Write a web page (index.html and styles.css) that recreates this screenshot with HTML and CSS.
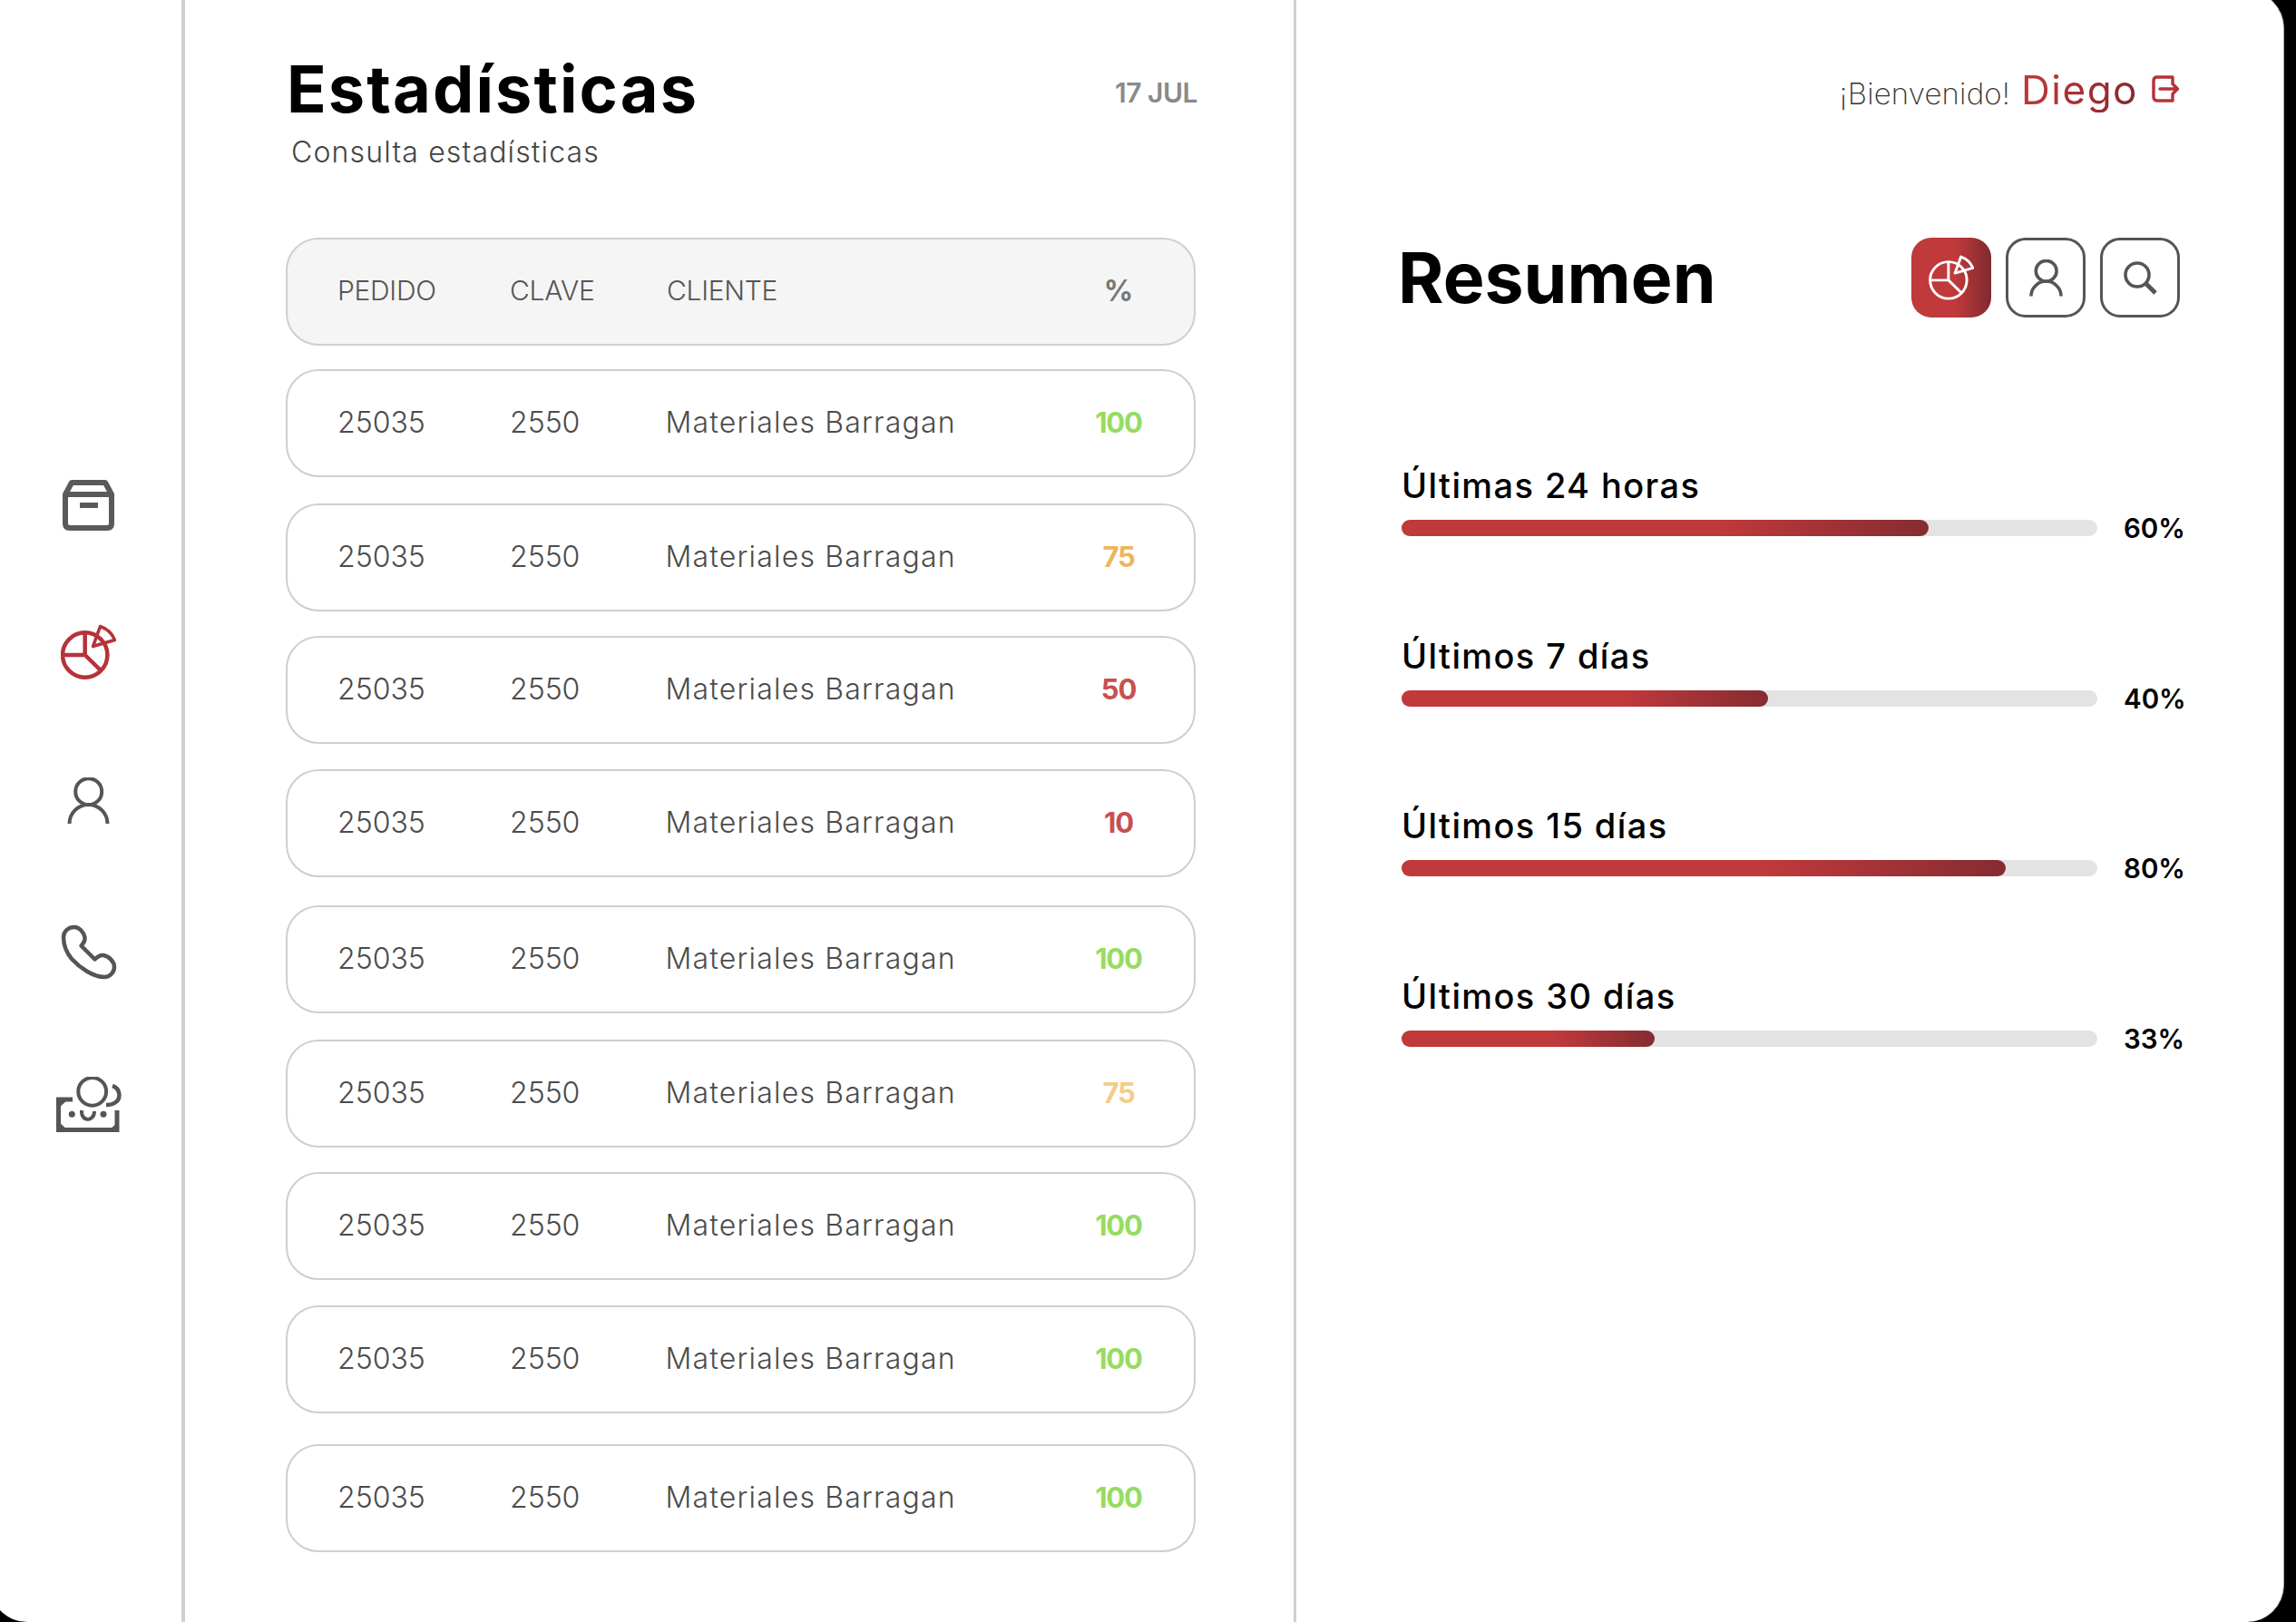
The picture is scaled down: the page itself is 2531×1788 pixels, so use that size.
FILE: index.html
```html
<!DOCTYPE html>
<html lang="es">
<head>
<meta charset="utf-8">
<title>Estadísticas</title>
<link rel="stylesheet" href="styles.css">
</head>
<body>
<div class="panel">
  <nav class="sidebar">
    <svg class="nav-icon nav-archive" width="57" height="56" viewBox="0 0 57 56" fill="none" stroke="#5a5a5a" stroke-width="6" stroke-linejoin="round"><path d="M3 16 10 3H47L54 16V48Q54 53 49 53H8Q3 53 3 48Z"/><path d="M3 16H54"/><path d="M19 28H39" stroke-linecap="butt"/></svg>
    <svg class="nav-icon nav-pie" width="61" height="61" viewBox="0 0 61 61" fill="none" stroke="#b5333a" stroke-width="4.5"><circle cx="26.7" cy="34" r="24.7"/><path d="M26.7 9V34H2M26.7 34 44 51"/><path d="M35.5 24.5 43.5 2.5Q55 6.5 59.5 17.5Z" stroke-linejoin="round" stroke-width="3.6"/></svg>
    <svg class="nav-icon nav-user" width="47" height="51" viewBox="0 0 47 51" fill="none" stroke="#555" stroke-width="4"><circle cx="23.7" cy="15.7" r="14.5"/><path d="M2.5 51A21 21 0 0 1 44.5 51"/></svg>
    <svg class="nav-icon nav-phone" width="62" height="61" viewBox="0 0 62 61" fill="none" stroke="#555" stroke-width="4.5" stroke-linejoin="round"><path d="M3 14C3 7 9 3 15 3 20 3 25 8 26.5 14 27 18 25 21 22.5 23.5L37.5 38.5C40 36 43 33.5 47 34 53 35 59 41 59 47 59 53 54 58 48 58 36 58 21 48 12 38 7 32 3 23 3 14Z"/></svg>
    <svg class="nav-icon nav-money" width="72" height="61" viewBox="0 0 72 61" fill="none" stroke="#555"><circle cx="39.7" cy="16.3" r="15.4" stroke-width="4"/><path d="M62 10C71 13 72 25 64 29 61 31 58 31 55 31" stroke-width="4.5"/><path d="M18 25H2.5V58.5H67V37" stroke-width="5"/><path d="M2 25H13L2 35ZM2 59V49L13 59ZM68 59H58L68 50Z" fill="#555" stroke="none"/><circle cx="17.3" cy="41.3" r="3.5" fill="#555" stroke="none"/><circle cx="52" cy="41.3" r="3.5" fill="#555" stroke="none"/><path d="M28 37C27 50 42 50 42 38" stroke-width="4"/></svg>
  </nav>

  <main class="orders">
    <header class="orders-head">
      <div>
        <h1 class="title">Estadísticas</h1>
        <p class="subtitle">Consulta estadísticas</p>
      </div>
      <span class="date">17 JUL</span>
    </header>
    <div class="table">
      <div class="row row-head"><span>PEDIDO</span><span>CLAVE</span><span>CLIENTE</span><span class="pct pct-head">%</span></div>
      <div class="row"><span>25035</span><span>2550</span><span class="client">Materiales Barragan</span><span class="pct green">100</span></div>
      <div class="row"><span>25035</span><span>2550</span><span class="client">Materiales Barragan</span><span class="pct orange">75</span></div>
      <div class="row"><span>25035</span><span>2550</span><span class="client">Materiales Barragan</span><span class="pct red">50</span></div>
      <div class="row"><span>25035</span><span>2550</span><span class="client">Materiales Barragan</span><span class="pct red">10</span></div>
      <div class="row"><span>25035</span><span>2550</span><span class="client">Materiales Barragan</span><span class="pct green">100</span></div>
      <div class="row"><span>25035</span><span>2550</span><span class="client">Materiales Barragan</span><span class="pct pale">75</span></div>
      <div class="row"><span>25035</span><span>2550</span><span class="client">Materiales Barragan</span><span class="pct green">100</span></div>
      <div class="row"><span>25035</span><span>2550</span><span class="client">Materiales Barragan</span><span class="pct green">100</span></div>
      <div class="row"><span>25035</span><span>2550</span><span class="client">Materiales Barragan</span><span class="pct green">100</span></div>
    </div>
  </main>

  <aside class="summary">
    <div class="welcome">
      <span class="hello">¡Bienvenido!</span>
      <span class="name">Diego</span>
      <svg class="logout" width="31" height="30" viewBox="0 0 31 30" fill="none" stroke="#b5333a" stroke-width="3.4" stroke-linejoin="round" stroke-linecap="round"><path d="M23 8V2H6Q2 2 2 6V24Q2 28 6 28H23V22"/><path d="M9 15H28.5M23 9.5 28.5 15 23 20.5"/></svg>
    </div>
    <div class="summary-head">
      <h2 class="resumen">Resumen</h2>
      <div class="actions">
        <button class="action action-on"><svg width="50" height="50" viewBox="0 0 61 61" fill="none" stroke="#fff" stroke-width="3.6"><circle cx="26.7" cy="34" r="24.7"/><path d="M26.7 9V34H2M26.7 34 44 51"/><path d="M35.5 24.5 43.5 2.5Q55 6.5 59.5 17.5Z" stroke-linejoin="round"/></svg></button>
        <button class="action"><svg width="37" height="41" viewBox="0 0 47 51" fill="none" stroke="#555" stroke-width="4.5"><circle cx="23.7" cy="15.7" r="14.5"/><path d="M2.5 51A21 21 0 0 1 44.5 51"/></svg></button>
        <button class="action"><svg width="37" height="37" viewBox="0 0 37 37" fill="none" stroke="#555"><circle cx="15" cy="15" r="13" stroke-width="3.6"/><path d="M24.5 24.5 35 35" stroke-width="5"/></svg></button>
      </div>
    </div>
    <div class="stats">
      <div class="stat"><div class="stat-label">Últimas 24 horas</div><div class="track"><div class="fill" style="width:581px"></div></div><span class="stat-pct">60%</span></div>
      <div class="stat"><div class="stat-label">Últimos 7 días</div><div class="track"><div class="fill" style="width:404px"></div></div><span class="stat-pct">40%</span></div>
      <div class="stat"><div class="stat-label">Últimos 15 días</div><div class="track"><div class="fill" style="width:666px"></div></div><span class="stat-pct">80%</span></div>
      <div class="stat"><div class="stat-label">Últimos 30 días</div><div class="track"><div class="fill" style="width:279px"></div></div><span class="stat-pct">33%</span></div>
    </div>
  </aside>
</div>
</body>
</html>
```
FILE: styles.css
```css
* { box-sizing: border-box; margin: 0; padding: 0; }
html, body { height: 100%; }
body {
  background: #000;
  overflow: hidden;
  font-family: Inter, "Noto Sans", sans-serif;
  color: #555;
}
.panel {
  display: flex;
  width: 2529px;
  height: 1798px;
  margin: -10px 0 0 -11px;
  background: #fff;
  border-radius: 0 41px 41px 41px;
  border-right: 1px solid #aaa;
  overflow: hidden;
}
.sidebar {
  flex: 0 0 215px;
  border-right: 4px solid #cfcfcf;
  display: flex;
  flex-direction: column;
  align-items: center;
  padding: 539px 0 0 6px;
}
.nav-pie { margin-top: 103px; }
.nav-user { margin-top: 108px; }
.nav-phone { margin-top: 111px; }
.nav-money { margin-top: 107px; }
.nav-icon { display: block; flex: none; }

.orders {
  flex: 0 0 1225px;
  border-right: 3px solid #cfcfcf;
  padding: 10px 108px 0 111px;
}
.orders-head {
  display: flex;
  justify-content: space-between;
  align-items: flex-start;
  height: 262px;
  margin-right: -2px;
}
.title {
  font-size: 72px;
  font-weight: 700;
  line-height: 80px;
  letter-spacing: 2.1px;
  color: #000;
  margin: 58px 0 0 1px;
}
.subtitle {
  font-size: 32px;
  font-weight: 300;
  line-height: 40px;
  letter-spacing: 1.15px;
  color: #444;
  margin: 10px 0 0 6px;
}
.date {
  font-size: 30px;
  font-weight: 600;
  line-height: 40px;
  letter-spacing: -0.5px;
  color: #8a8a8a;
  margin-top: 82px;
}
.row {
  display: grid;
  grid-template-columns: 190px 173px 1fr 100px;
  align-items: center;
  height: 119px;
  padding: 0 33px 3px 55px;
  margin-top: 28px;
  border: 2px solid #cfcfcf;
  border-radius: 36px;
  font-size: 32px;
  font-weight: 350;
  color: #4c4c4c;
}
.client { letter-spacing: 1.2px; margin-left: -1.5px; }
.row-head {
  margin-top: 0;
  background: #f5f5f5;
  font-size: 30px;
  font-weight: 350;
  letter-spacing: -0.3px;
  padding-bottom: 3px;
  color: #555;
}
.row:nth-child(2) { margin-top: 26px; }
.row:nth-child(3) { margin-top: 29px; }
.row:nth-child(4) { margin-top: 27px; }
.row:nth-child(6) { margin-top: 31px; }
.row:nth-child(7) { margin-top: 29px; }
.row:nth-child(8) { margin-top: 27px; }
.row:nth-child(10) { margin-top: 34px; }
.pct { text-align: center; font-weight: 700; font-size: 31px; letter-spacing: -1.2px; }
.pct-head { color: #777; font-size: 32px; letter-spacing: 0; }
.green { color: #95dc62; }
.orange { color: #efb55a; }
.red { color: #c8504f; }
.pale { color: #f3cd88; }

.summary {
  flex: 1;
  padding: 10px 0 0 112px;
}
.welcome {
  display: flex;
  align-items: baseline;
  height: 262px;
  justify-content: flex-end;
  padding: 74px 114px 0 0;
  line-height: 50px;
}
.hello { font-size: 33px; font-weight: 200; letter-spacing: 0.15px; color: #333; }
.name {
  font-size: 44px;
  font-weight: 400;
  letter-spacing: 1.5px;
  margin-left: 12px;
  background: linear-gradient(90deg, #c0393b, #85292e);
  -webkit-background-clip: text;
  background-clip: text;
  color: transparent;
}
.logout { margin-left: 15px; align-self: flex-start; margin-top: 9px; }
.summary-head {
  display: flex;
  justify-content: space-between;
  align-items: center;
  height: 88px;
  margin-right: 114px;
}
.resumen { font-size: 77px; font-weight: 700; color: #000; line-height: 88px; }
.actions { display: flex; gap: 16px; }
.action {
  width: 88px;
  height: 88px;
  border: 3.5px solid #555;
  border-radius: 22px;
  background: #fff;
  display: flex;
  align-items: center;
  justify-content: center;
}
.action-on {
  border: 0;
  background: linear-gradient(90deg, #c0393b 55%, #7f2a2f);
}
.stats { margin-top: 160px; display: flex; flex-direction: column; }
.stat {
  display: grid;
  grid-template-columns: 767px auto;
  grid-template-rows: 50px 18px;
  column-gap: 29px;
  row-gap: 13px;
  align-items: center;
  align-content: start;
  height: 187.6px;
  margin-left: 4px;
}
.stat-label {
  grid-column: 1 / -1;
  font-size: 38px;
  font-weight: 450;
  letter-spacing: 1.4px;
  color: #000;
  line-height: 50px;
}
.track { height: 18px; border-radius: 9px; background: #e3e3e3; }
.fill { height: 18px; border-radius: 9px; background: linear-gradient(90deg, #c0393b 60%, #852c31); }
.stat-pct { font-size: 29.5px; font-weight: 600; color: #000; line-height: 18px; }
```
